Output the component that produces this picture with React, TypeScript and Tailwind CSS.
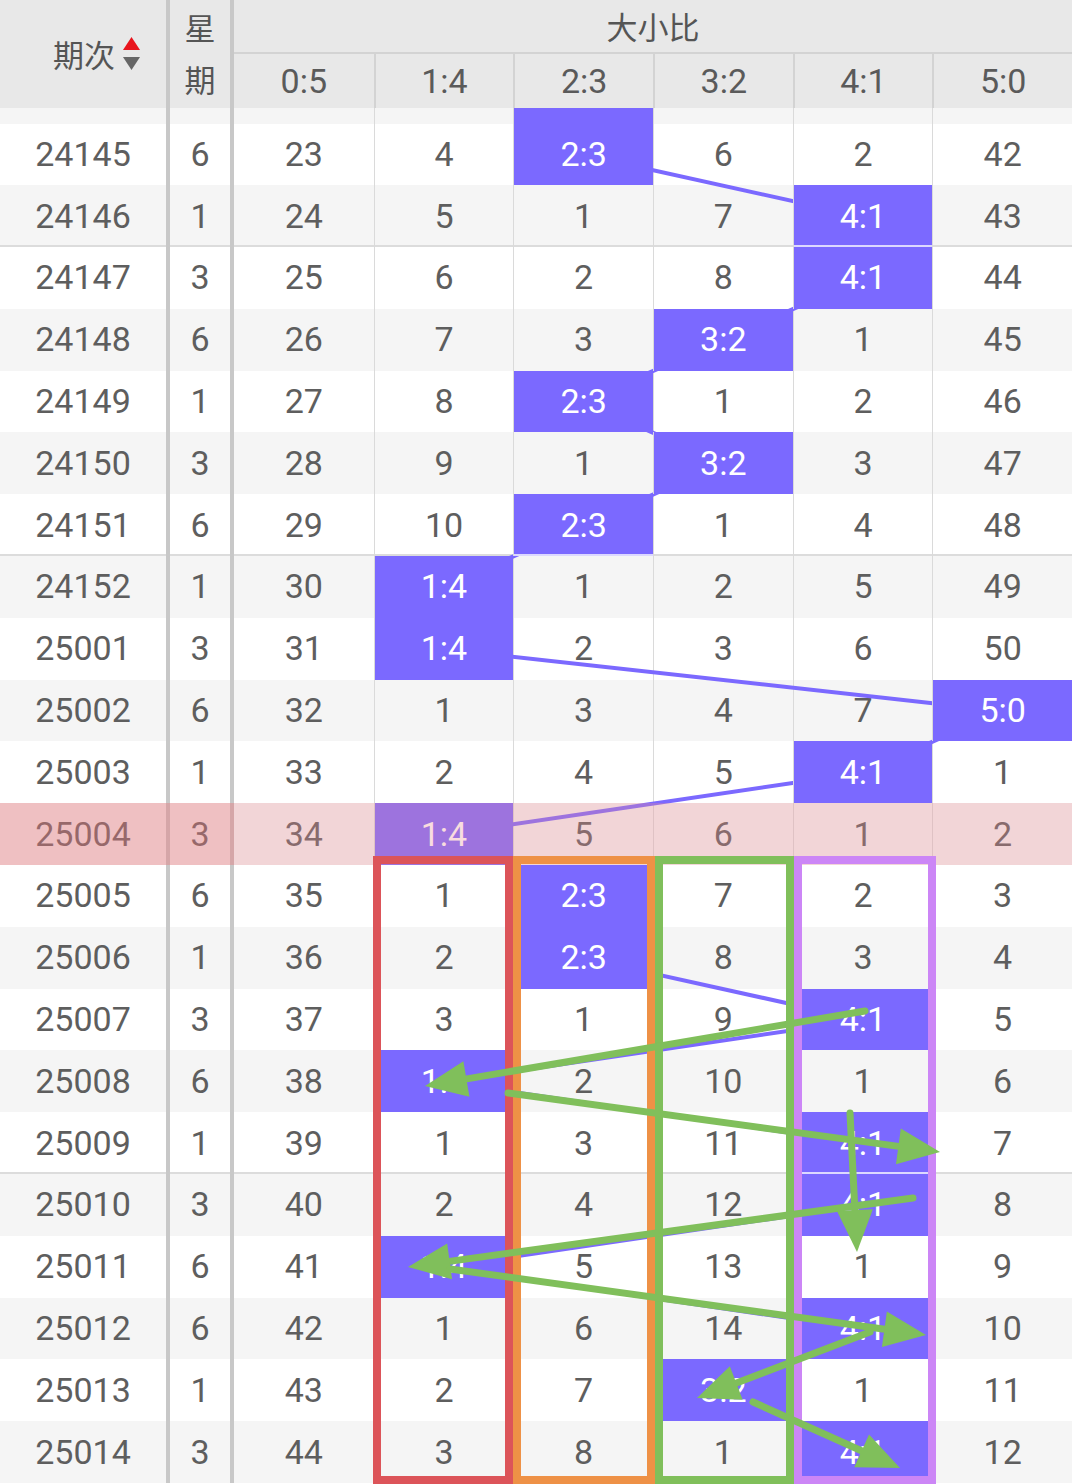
import React from "react";

type RowData = { id: string; day: string; v: string[]; b: number; sep?: boolean };

const rows: RowData[] = [
  { id: "", day: "", v: ["", "", "", "", "", ""], b: 2 },
  { id: "24145", day: "6", v: ["23", "4", "2:3", "6", "2", "42"], b: 2 },
  { id: "24146", day: "1", v: ["24", "5", "1", "7", "4:1", "43"], b: 4, sep: true },
  { id: "24147", day: "3", v: ["25", "6", "2", "8", "4:1", "44"], b: 4 },
  { id: "24148", day: "6", v: ["26", "7", "3", "3:2", "1", "45"], b: 3 },
  { id: "24149", day: "1", v: ["27", "8", "2:3", "1", "2", "46"], b: 2 },
  { id: "24150", day: "3", v: ["28", "9", "1", "3:2", "3", "47"], b: 3 },
  { id: "24151", day: "6", v: ["29", "10", "2:3", "1", "4", "48"], b: 2, sep: true },
  { id: "24152", day: "1", v: ["30", "1:4", "1", "2", "5", "49"], b: 1 },
  { id: "25001", day: "3", v: ["31", "1:4", "2", "3", "6", "50"], b: 1 },
  { id: "25002", day: "6", v: ["32", "1", "3", "4", "7", "5:0"], b: 5 },
  { id: "25003", day: "1", v: ["33", "2", "4", "5", "4:1", "1"], b: 4 },
  { id: "25004", day: "3", v: ["34", "1:4", "5", "6", "1", "2"], b: 1 },
  { id: "25005", day: "6", v: ["35", "1", "2:3", "7", "2", "3"], b: 2 },
  { id: "25006", day: "1", v: ["36", "2", "2:3", "8", "3", "4"], b: 2 },
  { id: "25007", day: "3", v: ["37", "3", "1", "9", "4:1", "5"], b: 4 },
  { id: "25008", day: "6", v: ["38", "1:4", "2", "10", "1", "6"], b: 1 },
  { id: "25009", day: "1", v: ["39", "1", "3", "11", "4:1", "7"], b: 4, sep: true },
  { id: "25010", day: "3", v: ["40", "2", "4", "12", "4:1", "8"], b: 4 },
  { id: "25011", day: "6", v: ["41", "1:4", "5", "13", "1", "9"], b: 1 },
  { id: "25012", day: "6", v: ["42", "1", "6", "14", "4:1", "10"], b: 4 },
  { id: "25013", day: "1", v: ["43", "2", "7", "3:2", "1", "11"], b: 3 },
  { id: "25014", day: "3", v: ["44", "3", "8", "1", "4:1", "12"], b: 4 },
];

const ROW_H = 61.8;
const COL_W = (1072 - 234) / 6;
const cx = (i: number) => 234 + COL_W * (i + 0.5);
const cy = (r: number) => ROW_H * r + ROW_H / 2;

const headers = ["0:5", "1:4", "2:3", "3:2", "4:1", "5:0"];

type Arrow = [number, number, number, number];
const arrows: Arrow[] = [
  [865, 1011, 425, 1086],
  [508, 1093, 940, 1152],
  [850, 1113, 857, 1252],
  [913, 1198, 408, 1267],
  [450, 1269, 926, 1335],
  [870, 1332, 697, 1398],
  [753, 1402, 900, 1468],
];

function ArrowShape({ a }: { a: Arrow }) {
  const [x1, y1, x2, y2] = a;
  const dx = x2 - x1;
  const dy = y2 - y1;
  const len = Math.hypot(dx, dy);
  const ux = dx / len;
  const uy = dy / len;
  const L = 42;
  const W = 18;
  const bx = x2 - ux * L;
  const by = y2 - uy * L;
  const px = -uy;
  const py = ux;
  const pts = `${x2},${y2} ${bx + px * W},${by + py * W} ${bx - px * W},${by - py * W}`;
  return (
    <g>
      <line x1={x1} y1={y1} x2={bx + ux * 4} y2={by + uy * 4} stroke="#80bf5b" strokeWidth={7} strokeLinecap="round" />
      <polygon points={pts} fill="#80bf5b" />
    </g>
  );
}

export default function App() {
  return (
    <div className="relative w-[1072px] h-[1484px] overflow-hidden bg-white text-[#5e5e5e] [font-family:Roboto,'Noto_Sans_CJK_SC',sans-serif]">
      {/* Header */}
      <div className="grid grid-cols-[166px_4px_60px_4px_1fr] h-[108px] bg-[#e8e8e8]">
        <div className="flex items-center justify-end pr-[26px] gap-[8px] text-[31px] text-[#555]">
          <span className="[font-family:'Noto_Sans_CJK_SC',sans-serif]">期次</span>
          <svg width="17" height="34" viewBox="0 0 17 34">
            <polygon points="8.5,0 17,13 0,13" fill="#e8141c" />
            <polygon points="0,20 17,20 8.5,33" fill="#666" />
          </svg>
        </div>
        <div className="bg-[#c8c8c8]" />
        <div className="flex flex-col items-center justify-center text-[31px] leading-[52px] text-[#555] [font-family:'Noto_Sans_CJK_SC',sans-serif] pb-[2px]">
          <span>星</span>
          <span>期</span>
        </div>
        <div className="bg-[#c8c8c8]" />
        <div className="flex flex-col">
          <div className="h-[54px] flex items-center justify-center border-b-2 border-[#d3d3d3] text-[31px] text-[#555] [font-family:'Noto_Sans_CJK_SC',sans-serif]">
            大小比
          </div>
          <div className="grid grid-cols-6 flex-1">
            {headers.map((h, i) => (
              <div
                key={h}
                className={`flex items-center justify-center text-[34px] text-[#5a5a5a] ${i > 0 ? "border-l-2 border-[#d3d3d3]" : ""}`}
              >
                {h}
              </div>
            ))}
          </div>
        </div>
      </div>

      {/* Body */}
      <div className="h-[1376px] overflow-hidden">
        <div className="relative -mt-[46.3px]">
          <svg className="absolute top-0 left-0 z-10 pointer-events-none" width={1072} height={rows.length * ROW_H}>
            {rows.slice(0, -1).map((r, k) => (
              <line
                key={k}
                x1={cx(r.b)}
                y1={cy(k)}
                x2={cx(rows[k + 1].b)}
                y2={cy(k + 1)}
                stroke="#7b69ff"
                strokeWidth={4}
              />
            ))}
          </svg>
          {rows.map((r, k) => {
            const gray = k % 2 === 0;
            const hl = r.id === "25004";
            return (
              <div
                key={k}
                className={`relative grid grid-cols-[166px_4px_60px_4px_repeat(6,minmax(0,1fr))] h-[61.8px] text-[34px] ${gray ? "bg-[#f5f5f5]" : "bg-white"} ${r.sep ? "shadow-[inset_0_-2px_0_#dcdcdc]" : ""}`}
              >
                <div className="flex items-center justify-center">{r.id}</div>
                <div className="bg-[#c8c8c8]" />
                <div className="flex items-center justify-center">{r.day}</div>
                <div className="bg-[#c8c8c8]" />
                {r.v.map((val, i) => {
                  const blue = i === r.b;
                  return (
                    <div
                      key={i}
                      className={`flex items-center justify-center ${i > 0 ? "border-l border-[#dadada]" : ""} ${
                        blue ? "relative z-20 bg-[#7b69ff] text-white" : ""
                      } ${blue && r.sep ? "shadow-[inset_0_-2px_0_#dcd8ff]" : ""}`}
                    >
                      {val}
                    </div>
                  );
                })}
                {hl && (
                  <>
                    <div className="absolute top-0 bottom-0 left-0 w-[234px] z-30 bg-[rgba(230,120,125,0.42)]" />
                    <div className="absolute top-0 bottom-0 left-[234px] right-0 z-30 bg-[rgba(235,138,145,0.3)]" />
                  </>
                )}
              </div>
            );
          })}
        </div>
      </div>

      {/* Annotations */}
      <svg className="absolute top-0 left-0 z-40 pointer-events-none" width={1072} height={1484}>
        <rect x={377} y={860} width={132} height={620} fill="none" stroke="#dc5459" strokeWidth={8} />
        <rect x={517} y={860} width={134} height={620} fill="none" stroke="#ee9146" strokeWidth={8} />
        <rect x={659} y={860} width={131} height={620} fill="none" stroke="#80bf5b" strokeWidth={8} />
        <rect x={798} y={860} width={134} height={620} fill="none" stroke="#cc86f6" strokeWidth={8} />
        {arrows.map((a, i) => (
          <ArrowShape key={i} a={a} />
        ))}
      </svg>
    </div>
  );
}
